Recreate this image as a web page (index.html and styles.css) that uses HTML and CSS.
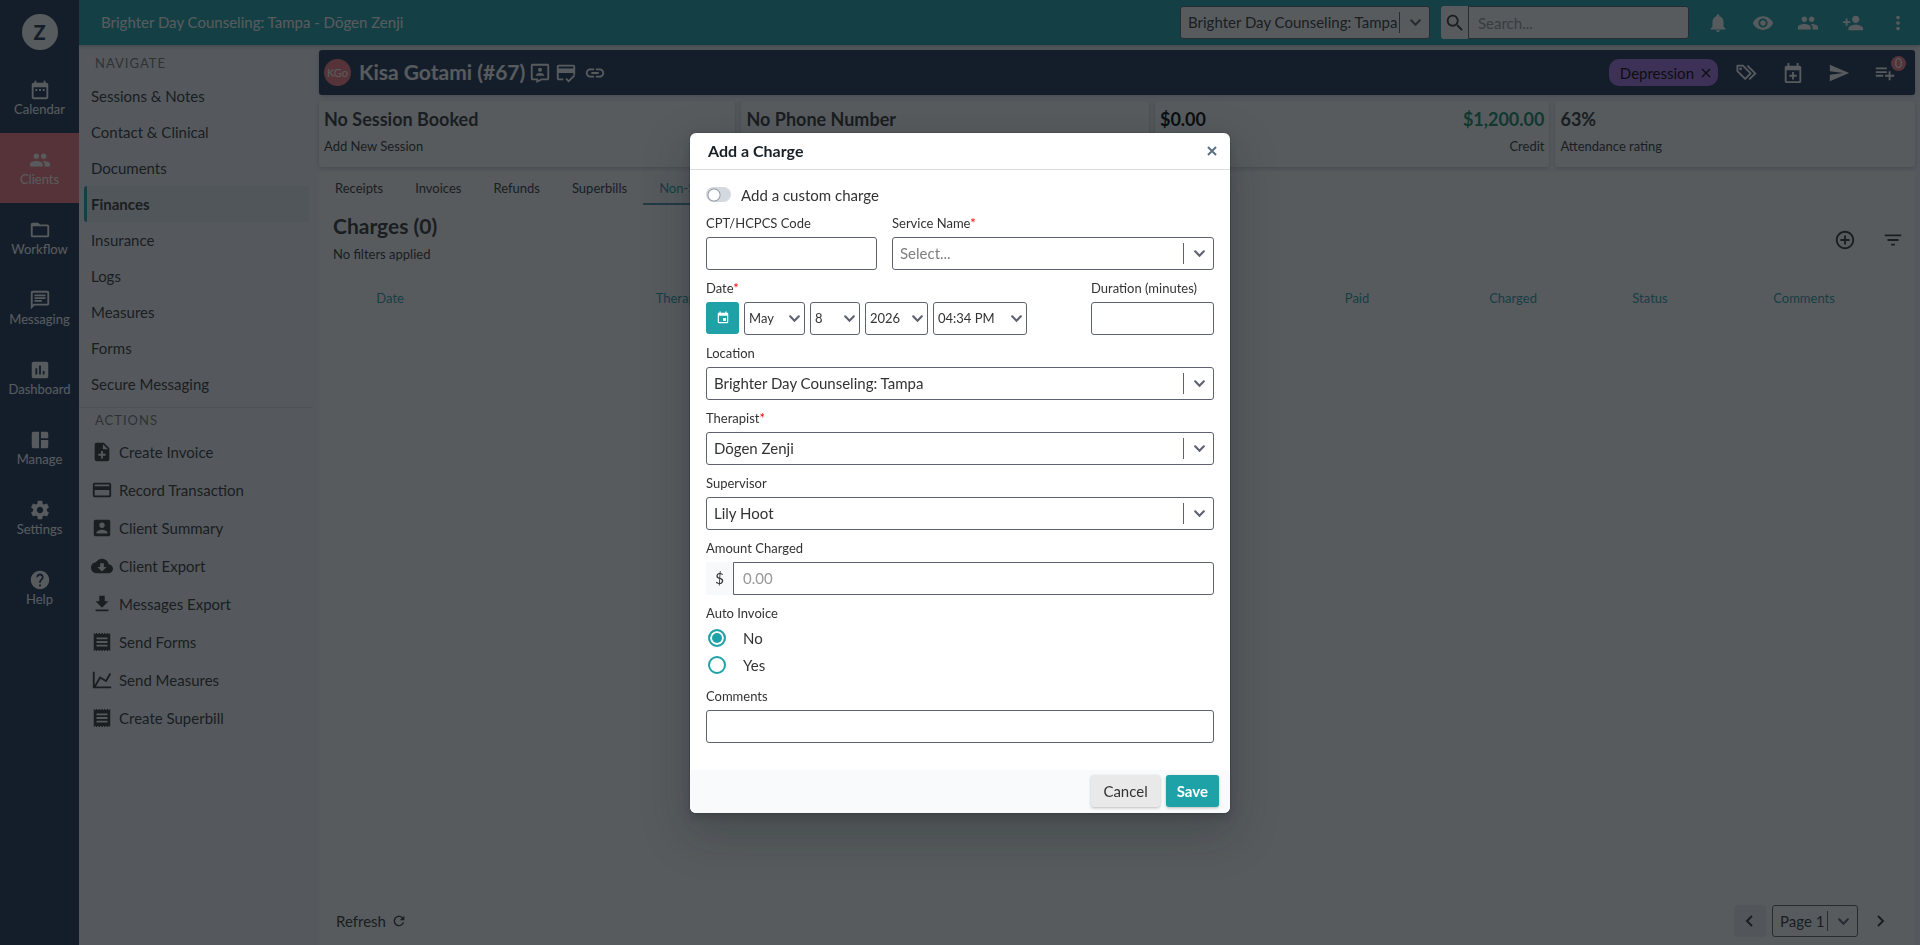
FILE: index.html
```html
<!DOCTYPE html>
<html lang="en">
<head>
  <meta charset="UTF-8">
  <title>Kisa Gotami - Finances</title>
  <meta name="viewport" content="width=device-width, initial-scale=1.0">
  <link rel="stylesheet" href="styles.css">
</head>
<body>
  <!-- Icon sprite -->
  <svg class="sprite" aria-hidden="true">
    <symbol id="i-calendar" viewBox="0 0 24 24"><path d="M9 11H7v2h2v-2zm4 0h-2v2h2v-2zm4 0h-2v2h2v-2zm2-7h-1V2h-2v2H8V2H6v2H5c-1.11 0-1.99.9-1.99 2L3 20c0 1.1.89 2 2 2h14c1.1 0 2-.9 2-2V6c0-1.1-.9-2-2-2zm0 16H5V9h14v11z"/></symbol>
    <symbol id="i-people" viewBox="0 0 24 24"><path d="M16 11c1.66 0 2.99-1.34 2.99-3S17.66 5 16 5c-1.66 0-3 1.34-3 3s1.34 3 3 3zm-8 0c1.66 0 2.99-1.34 2.99-3S9.66 5 8 5C6.34 5 5 6.34 5 8s1.34 3 3 3zm0 2c-2.33 0-7 1.17-7 3.5V19h14v-2.5c0-2.33-4.67-3.5-7-3.5zm8 0c-.29 0-.62.02-.97.05 1.16.84 1.97 1.97 1.97 3.45V19h6v-2.5c0-2.33-4.67-3.5-7-3.5z"/></symbol>
    <symbol id="i-folder" viewBox="0 0 24 24"><path d="M20 6h-8l-2-2H4c-1.1 0-1.99.9-1.99 2L2 18c0 1.1.9 2 2 2h16c1.1 0 2-.9 2-2V8c0-1.1-.9-2-2-2zm0 12H4V8h16v10z"/></symbol>
    <symbol id="i-chat" viewBox="0 0 24 24"><path d="M4 4h16v12H5.17L4 17.17V4m0-2c-1.1 0-1.99.9-1.99 2L2 22l4-4h14c1.1 0 2-.9 2-2V4c0-1.1-.9-2-2-2H4zm2 10h8v2H6v-2zm0-3h12v2H6V9zm0-3h12v2H6V6z"/></symbol>
    <symbol id="i-chart" viewBox="0 0 24 24"><path d="M19 3H5c-1.1 0-2 .9-2 2v14c0 1.1.9 2 2 2h14c1.1 0 2-.9 2-2V5c0-1.1-.9-2-2-2zM9 17H7v-7h2v7zm4 0h-2V7h2v10zm4 0h-2v-4h2v4z"/></symbol>
    <symbol id="i-manage" viewBox="0 0 24 24"><path d="M11 21H5c-1.1 0-2-.9-2-2V5c0-1.1.9-2 2-2h6v18zm2 0h6c1.1 0 2-.9 2-2v-7h-8v9zm8-11V5c0-1.1-.9-2-2-2h-6v7h8z"/></symbol>
    <symbol id="i-settings" viewBox="0 0 24 24"><path d="M19.43 12.98c.04-.32.07-.64.07-.98s-.03-.66-.07-.98l2.11-1.65c.19-.15.24-.42.12-.64l-2-3.46c-.12-.22-.39-.3-.61-.22l-2.49 1c-.52-.4-1.08-.73-1.69-.98l-.38-2.65C14.46 2.18 14.25 2 14 2h-4c-.25 0-.46.18-.49.42l-.38 2.65c-.61.25-1.17.59-1.69.98l-2.49-1c-.23-.09-.49 0-.61.22l-2 3.46c-.13.22-.07.49.12.64l2.11 1.65c-.04.32-.07.65-.07.98s.03.66.07.98l-2.11 1.65c-.19.15-.24.42-.12.64l2 3.46c.12.22.39.3.61.22l2.49-1c.52.4 1.08.73 1.69.98l.38 2.65c.03.24.24.42.49.42h4c.25 0 .46-.18.49-.42l.38-2.65c.61-.25 1.17-.59 1.69-.98l2.49 1c.23.09.49 0 .61-.22l2-3.46c.12-.22.07-.49-.12-.64l-2.11-1.65zM12 15.5c-1.93 0-3.5-1.57-3.5-3.5s1.57-3.5 3.5-3.5 3.5 1.57 3.5 3.5-1.57 3.5-3.5 3.5z"/></symbol>
    <symbol id="i-help" viewBox="0 0 24 24"><path d="M12 2C6.48 2 2 6.48 2 12s4.48 10 10 10 10-4.48 10-10S17.52 2 12 2zm1 17h-2v-2h2v2zm2.07-7.75l-.9.92C13.45 12.9 13 13.5 13 15h-2v-.5c0-1.1.45-2.1 1.17-2.83l1.24-1.26c.37-.36.59-.86.59-1.41 0-1.1-.9-2-2-2s-2 .9-2 2H8c0-2.21 1.79-4 4-4s4 1.79 4 4c0 .88-.36 1.68-.93 2.25z"/></symbol>
    <symbol id="i-note-add" viewBox="0 0 24 24"><path d="M14 2H6c-1.1 0-1.99.9-1.99 2L4 20c0 1.1.89 2 1.99 2H18c1.1 0 2-.9 2-2V8l-6-6zm2 14h-3v3h-2v-3H8v-2h3v-3h2v3h3v2zm-3-7V3.5L18.5 9H13z"/></symbol>
    <symbol id="i-card" viewBox="0 0 24 24"><path d="M20 4H4c-1.11 0-1.99.89-1.99 2L2 18c0 1.11.89 2 2 2h16c1.11 0 2-.89 2-2V6c0-1.11-.89-2-2-2zm0 14H4v-6h16v6zm0-10H4V6h16v2z"/></symbol>
    <symbol id="i-account" viewBox="0 0 24 24"><path d="M3 5v14c0 1.1.89 2 2 2h14c1.1 0 2-.9 2-2V5c0-1.1-.9-2-2-2H5c-1.11 0-2 .9-2 2zm12 4c0 1.66-1.34 3-3 3s-3-1.34-3-3 1.34-3 3-3 3 1.34 3 3zm-9 8c0-2 4-3.1 6-3.1s6 1.1 6 3.1v1H6v-1z"/></symbol>
    <symbol id="i-cloud" viewBox="0 0 24 24"><path d="M19.35 10.04C18.67 6.59 15.64 4 12 4 9.11 4 6.6 5.64 5.35 8.04 2.34 8.36 0 10.91 0 14c0 3.31 2.69 6 6 6h13c2.76 0 5-2.24 5-5 0-2.64-2.05-4.78-4.65-4.96zM17 13l-5 5-5-5h3V9h4v4h3z"/></symbol>
    <symbol id="i-download" viewBox="0 0 24 24"><path d="M19 9h-4V3H9v6H5l7 7 7-7zM5 18v2h14v-2H5z"/></symbol>
    <symbol id="i-receipt" viewBox="0 0 24 24"><path d="M18 17H6v-2h12v2zm0-4H6v-2h12v2zm0-4H6V7h12v2zM3 22l1.5-1.5L6 22l1.5-1.5L9 22l1.5-1.5L12 22l1.5-1.5L15 22l1.5-1.5L18 22l1.5-1.5L21 22V2l-1.5 1.5L18 2l-1.5 1.5L15 2l-1.5 1.5L12 2l-1.5 1.5L9 2 7.5 3.5 6 2 4.5 3.5 3 2v20z"/></symbol>
    <symbol id="i-line" viewBox="0 0 24 24"><path d="M16 11.78l4.24-7.33 1.73 1-5.23 9.05-6.51-3.75L5.46 19H22v2H2V3h2v14.54L9.5 8z"/></symbol>
    <symbol id="i-bell" viewBox="0 0 24 24"><path d="M12 22c1.1 0 2-.9 2-2h-4c0 1.1.89 2 2 2zm6-6v-5c0-3.07-1.64-5.64-4.5-6.32V4c0-.83-.67-1.5-1.5-1.5s-1.5.67-1.5 1.5v.68C7.63 5.36 6 7.92 6 11v5l-2 2v1h16v-1l-2-2z"/></symbol>
    <symbol id="i-eye" viewBox="0 0 24 24"><path d="M12 4.5C7 4.5 2.73 7.61 1 12c1.73 4.39 6 7.5 11 7.5s9.27-3.11 11-7.5c-1.73-4.39-6-7.5-11-7.5zM12 17c-2.76 0-5-2.24-5-5s2.24-5 5-5 5 2.24 5 5-2.24 5-5 5zm0-8c-1.66 0-3 1.34-3 3s1.34 3 3 3 3-1.34 3-3-1.34-3-3-3z"/></symbol>
    <symbol id="i-person-add" viewBox="0 0 24 24"><path d="M15 12c2.21 0 4-1.79 4-4s-1.79-4-4-4-4 1.79-4 4 1.79 4 4 4zm-9-2V7H4v3H1v2h3v3h2v-3h3v-2H6zm9 4c-2.67 0-8 1.34-8 4v2h16v-2c0-2.66-5.33-4-8-4z"/></symbol>
    <symbol id="i-more" viewBox="0 0 24 24"><path d="M12 8c1.1 0 2-.9 2-2s-.9-2-2-2-2 .9-2 2 .9 2 2 2zm0 2c-1.1 0-2 .9-2 2s.9 2 2 2 2-.9 2-2-.9-2-2-2zm0 6c-1.1 0-2 .9-2 2s.9 2 2 2 2-.9 2-2-.9-2-2-2z"/></symbol>
    <symbol id="i-search" viewBox="0 0 24 24"><path d="M15.5 14h-.79l-.28-.27C15.41 12.59 16 11.11 16 9.5 16 5.91 13.09 3 9.5 3S3 5.91 3 9.5 5.91 16 9.5 16c1.61 0 3.09-.59 4.23-1.57l.27.28v.79l5 4.99L20.49 19l-4.99-5zm-6 0C7.01 14 5 11.99 5 9.5S7.01 5 9.5 5 14 7.01 14 9.5 11.99 14 9.5 14z"/></symbol>
    <symbol id="i-contact" viewBox="0 0 24 24"><path d="M20 2H4c-1.1 0-2 .9-2 2v14c0 1.1.9 2 2 2h4v3l6-3h6c1.1 0 2-.9 2-2V4c0-1.1-.9-2-2-2zm0 16h-6.5L10 19.8V18H4V4h16v14z"/><circle cx="12" cy="8.500" r="2.200"/><path d="M7.500 14.800c0-2 3-2.800 4.500-2.800s4.500.8 4.500 2.800V15h-9z"/></symbol>
    <symbol id="i-card-check" viewBox="0 0 24 24"><path d="M20 3H4c-1.110 0-2 .89-2 2v13c0 1.110.89 2 2 2h5v-2H4v-6h16v2h2V5c0-1.110-.89-2-2-2zm0 4H4V5h16v2z"/><path d="M14.900 22.300l-3.500-3.500 1.400-1.400 2.100 2.100 5.700-5.700 1.400 1.400z"/></symbol>
    <symbol id="i-link" viewBox="0 0 24 24"><path d="M3.900 12c0-1.710 1.390-3.100 3.100-3.100h4V7H7c-2.760 0-5 2.240-5 5s2.240 5 5 5h4v-1.900H7c-1.710 0-3.100-1.390-3.100-3.100zM8 13h8v-2H8v2zm9-6h-4v1.900h4c1.710 0 3.100 1.390 3.100 3.100s-1.390 3.100-3.100 3.100h-4V17h4c2.760 0 5-2.240 5-5s-2.240-5-5-5z"/></symbol>
    <symbol id="i-tags" viewBox="0 0 24 24"><path d="M1.500 4v6l8.500 8.500 6-6L7.500 4z" fill="none" stroke="currentColor" stroke-width="2" stroke-linejoin="round"/><path d="M12.500 4l8.500 8.500-6.500 6.500" fill="none" stroke="currentColor" stroke-width="2"/><circle cx="5" cy="7.500" r="1.400"/></symbol>
    <symbol id="i-event-add" viewBox="0 0 24 24"><path d="M19 4h-1V1h-2v3H8V1H6v3H5c-1.100 0-2 .9-2 2v15c0 1.100.9 2 2 2h14c1.100 0 2-.9 2-2V6c0-1.100-.9-2-2-2zm0 17H5V9h14v12zm-8-2h2v-3h3v-2h-3v-3h-2v3H8v2h3z"/></symbol>
    <symbol id="i-send" viewBox="0 0 24 24"><path d="M2.010 21L23 12 2.010 3 2 10l15 2-15 2z"/></symbol>
    <symbol id="i-list-add" viewBox="0 0 24 24"><path d="M14 10H2v2h12v-2zm0-4H2v2h12V6zm4 8v-4h-2v4h-4v2h4v4h2v-4h4v-2h-4zM2 16h8v-2H2v2z"/></symbol>
    <symbol id="i-add" viewBox="0 0 24 24"><path d="M13 7h-2v4H7v2h4v4h2v-4h4v-2h-4V7zm-1-5C6.480 2 2 6.480 2 12s4.480 10 10 10 10-4.480 10-10S17.520 2 12 2zm0 18c-4.410 0-8-3.590-8-8s3.590-8 8-8 8 3.590 8 8-3.590 8-8 8z"/></symbol>
    <symbol id="i-filter" viewBox="0 0 24 24"><path d="M10 18h4v-2h-4v2zM3 6v2h18V6H3zm3 7h12v-2H6v2z"/></symbol>
    <symbol id="i-refresh" viewBox="0 0 24 24"><path d="M17.650 6.350C16.200 4.900 14.210 4 12 4c-4.420 0-7.990 3.580-7.990 8s3.570 8 7.990 8c3.730 0 6.840-2.550 7.730-6h-2.080c-.82 2.330-3.040 4-5.650 4-3.310 0-6-2.690-6-6s2.690-6 6-6c1.660 0 3.140.69 4.220 1.780L13 11h7V4l-2.350 2.350z"/></symbol>
    <symbol id="i-event" viewBox="0 0 24 24"><path d="M17 12h-5v5h5v-5zM16 1v2H8V1H6v2H5c-1.110 0-1.990.9-1.990 2L3 19c0 1.100.89 2 2 2h14c1.100 0 2-.9 2-2V5c0-1.100-.9-2-2-2h-1V1h-2zm3 18H5V8h14v11z"/></symbol>
    <symbol id="i-down" viewBox="0 0 12 12"><path d="M2 4l4 4 4-4" fill="none" stroke="currentColor" stroke-width="2" stroke-linecap="round"/></symbol>
    <symbol id="i-left" viewBox="0 0 12 12"><path d="M8 1L3 6l5 5" fill="none" stroke="currentColor" stroke-width="2"/></symbol>
    <symbol id="i-right" viewBox="0 0 12 12"><path d="M4 1l5 5-5 5" fill="none" stroke="currentColor" stroke-width="2"/></symbol>
    <symbol id="i-close" viewBox="0 0 12 12"><path d="M2 2l8 8M10 2l-8 8" fill="none" stroke="currentColor" stroke-width="2"/></symbol>
    <symbol id="i-close-thin" viewBox="0 0 12 12"><path d="M2 2l8 8M10 2l-8 8" fill="none" stroke="currentColor" stroke-width="1.300"/></symbol>
  </svg>

  <div class="app">
    <nav class="rail" aria-label="Main">
      <a href="#" class="logo">Z</a>
      <a href="#" class="rail-item"><svg class="icon"><use href="#i-calendar"/></svg>Calendar</a>
      <a href="#" class="rail-item active"><svg class="icon"><use href="#i-people"/></svg>Clients</a>
      <a href="#" class="rail-item"><svg class="icon"><use href="#i-folder"/></svg>Workflow</a>
      <a href="#" class="rail-item"><svg class="icon"><use href="#i-chat"/></svg>Messaging</a>
      <a href="#" class="rail-item"><svg class="icon"><use href="#i-chart"/></svg>Dashboard</a>
      <a href="#" class="rail-item"><svg class="icon"><use href="#i-manage"/></svg>Manage</a>
      <a href="#" class="rail-item"><svg class="icon"><use href="#i-settings"/></svg>Settings</a>
      <a href="#" class="rail-item"><svg class="icon"><use href="#i-help"/></svg>Help</a>
    </nav>

    <div class="page">
      <header class="topbar">
        <div class="practice">Brighter Day Counseling: Tampa - Dōgen Zenji</div>
        <div class="select select-split top-select">
          <select aria-label="Practice location"><option>Brighter Day Counseling: Tampa</option></select>
          <span class="arrow"><svg><use href="#i-down"/></svg></span>
        </div>
        <div class="search">
          <button type="button" aria-label="Search"><svg class="icon"><use href="#i-search"/></svg></button>
          <input type="text" placeholder="Search..." aria-label="Search text">
        </div>
        <div class="top-icons">
          <button type="button" aria-label="Notifications"><svg class="icon"><use href="#i-bell"/></svg></button>
          <button type="button" aria-label="View"><svg class="icon"><use href="#i-eye"/></svg></button>
          <button type="button" aria-label="Clients"><svg class="icon"><use href="#i-people"/></svg></button>
          <button type="button" aria-label="Add client"><svg class="icon"><use href="#i-person-add"/></svg></button>
          <button type="button" aria-label="More"><svg class="icon"><use href="#i-more"/></svg></button>
        </div>
      </header>

      <div class="columns">
        <aside class="side">
          <h2 class="side-title">NAVIGATE</h2>
          <nav class="side-nav" aria-label="Client">
            <a href="#">Sessions &amp; Notes</a>
            <a href="#">Contact &amp; Clinical</a>
            <a href="#">Documents</a>
            <a href="#" class="active">Finances</a>
            <a href="#">Insurance</a>
            <a href="#">Logs</a>
            <a href="#">Measures</a>
            <a href="#">Forms</a>
            <a href="#">Secure Messaging</a>
          </nav>
          <h2 class="side-title divided">ACTIONS</h2>
          <nav class="side-actions" aria-label="Actions">
            <a href="#"><svg class="icon"><use href="#i-note-add"/></svg>Create Invoice</a>
            <a href="#"><svg class="icon"><use href="#i-card"/></svg>Record Transaction</a>
            <a href="#"><svg class="icon"><use href="#i-account"/></svg>Client Summary</a>
            <a href="#"><svg class="icon"><use href="#i-cloud"/></svg>Client Export</a>
            <a href="#"><svg class="icon"><use href="#i-download"/></svg>Messages Export</a>
            <a href="#"><svg class="icon"><use href="#i-receipt"/></svg>Send Forms</a>
            <a href="#"><svg class="icon"><use href="#i-line"/></svg>Send Measures</a>
            <a href="#"><svg class="icon"><use href="#i-receipt"/></svg>Create Superbill</a>
          </nav>
        </aside>

        <main class="main">
          <div class="client-bar">
            <span class="avatar">KGo</span>
            <h1>Kisa Gotami (#67)</h1>
            <div class="client-links">
              <button type="button" aria-label="Contact"><svg class="icon"><use href="#i-contact"/></svg></button>
              <button type="button" aria-label="Card on file"><svg class="icon"><use href="#i-card-check"/></svg></button>
              <button type="button" aria-label="Link"><svg class="icon"><use href="#i-link"/></svg></button>
            </div>
            <span class="tag">Depression <button type="button" aria-label="Remove tag"><svg><use href="#i-close-thin"/></svg></button></span>
            <div class="client-icons">
              <button type="button" aria-label="Tags"><svg class="icon"><use href="#i-tags"/></svg></button>
              <button type="button" aria-label="Add session"><svg class="icon"><use href="#i-event-add"/></svg></button>
              <button type="button" aria-label="Send"><svg class="icon"><use href="#i-send"/></svg></button>
              <button type="button" aria-label="Tasks"><svg class="icon"><use href="#i-list-add"/></svg><span class="badge">0</span></button>
            </div>
          </div>

          <div class="cards">
            <div class="card"><strong>No Session Booked</strong><span>Add New Session</span></div>
            <div class="card"><strong>No Phone Number</strong></div>
            <div class="card split">
              <div><strong class="black">$0.00</strong></div>
              <div class="right"><strong class="green">$1,200.00</strong><span>Credit</span></div>
            </div>
            <div class="card"><strong>63%</strong><span>Attendance rating</span></div>
          </div>

          <section class="panel">
            <div class="tabs">
              <a href="#">Receipts</a>
              <a href="#">Invoices</a>
              <a href="#">Refunds</a>
              <a href="#">Superbills</a>
              <a href="#" class="active">Non-Session</a>
            </div>
            <div class="panel-head">
              <div>
                <h2>Charges (0)</h2>
                <p>No filters applied</p>
              </div>
              <div class="panel-icons">
                <button type="button" aria-label="Add charge"><svg class="icon"><use href="#i-add"/></svg></button>
                <button type="button" aria-label="Filter"><svg class="icon"><use href="#i-filter"/></svg></button>
              </div>
            </div>
            <table class="charges">
              <thead>
                <tr>
                  <th class="c-date">Date</th>
                  <th class="c-therapist">Therapist</th>
                  <th>Service</th>
                  <th class="c-amount">Paid</th>
                  <th class="c-amount">Charged</th>
                  <th class="c-status">Status</th>
                  <th class="c-comments">Comments</th>
                </tr>
              </thead>
            </table>
            <div class="panel-foot">
              <button type="button" class="refresh">Refresh <svg><use href="#i-refresh"/></svg></button>
              <div class="pager">
                <button type="button" class="prev" aria-label="Previous page"><svg><use href="#i-left"/></svg></button>
                <div class="select select-split page-select">
                  <select aria-label="Page"><option>Page 1</option></select>
                  <span class="arrow"><svg><use href="#i-down"/></svg></span>
                </div>
                <button type="button" aria-label="Next page"><svg><use href="#i-right"/></svg></button>
              </div>
            </div>
          </section>
        </main>
      </div>
    </div>
  </div>

  <!-- Add charge dialog -->
  <div class="overlay">
    <form class="dialog" role="dialog" aria-labelledby="dialog-title">
      <div class="dialog-head">
        <h2 id="dialog-title">Add a Charge</h2>
        <button type="button" aria-label="Close"><svg><use href="#i-close"/></svg></button>
      </div>

      <div class="dialog-body">
        <label class="toggle"><input type="checkbox">Add a custom charge</label>

        <div class="row">
          <div class="field code">
            <label for="code">CPT/HCPCS Code</label>
            <input type="text" id="code">
          </div>
          <div class="field grow">
            <label for="service">Service Name<span class="req">*</span></label>
            <div class="select select-split empty">
              <select id="service"><option>Select...</option></select>
              <span class="arrow"><svg><use href="#i-down"/></svg></span>
            </div>
          </div>
        </div>

        <div class="row">
          <div class="field grow">
            <label for="month">Date<span class="req">*</span></label>
            <div class="date-row">
              <button type="button" class="date-button" aria-label="Pick a date"><svg><use href="#i-event"/></svg></button>
              <div class="select month"><select id="month"><option>May</option></select><span class="arrow"><svg><use href="#i-down"/></svg></span></div>
              <div class="select day"><select aria-label="Day"><option>8</option></select><span class="arrow"><svg><use href="#i-down"/></svg></span></div>
              <div class="select year"><select aria-label="Year"><option>2026</option></select><span class="arrow"><svg><use href="#i-down"/></svg></span></div>
              <div class="select time"><select aria-label="Time"><option>04:34 PM</option></select><span class="arrow"><svg><use href="#i-down"/></svg></span></div>
            </div>
          </div>
          <div class="field duration">
            <label for="duration">Duration (minutes)</label>
            <input type="text" id="duration">
          </div>
        </div>

        <div class="field">
          <label for="location">Location</label>
          <div class="select select-split">
            <select id="location"><option>Brighter Day Counseling: Tampa</option></select>
            <span class="arrow"><svg><use href="#i-down"/></svg></span>
          </div>
        </div>

        <div class="field">
          <label for="therapist">Therapist<span class="req">*</span></label>
          <div class="select select-split">
            <select id="therapist"><option>Dōgen Zenji</option></select>
            <span class="arrow"><svg><use href="#i-down"/></svg></span>
          </div>
        </div>

        <div class="field">
          <label for="supervisor">Supervisor</label>
          <div class="select select-split">
            <select id="supervisor"><option>Lily Hoot</option></select>
            <span class="arrow"><svg><use href="#i-down"/></svg></span>
          </div>
        </div>

        <div class="field">
          <label for="amount">Amount Charged</label>
          <div class="money">
            <span>$</span>
            <input type="text" id="amount" placeholder="0.00">
          </div>
        </div>

        <fieldset class="radios">
          <legend>Auto Invoice</legend>
          <label><input type="radio" name="auto" checked>No</label>
          <label><input type="radio" name="auto">Yes</label>
        </fieldset>

        <div class="field">
          <label for="comments">Comments</label>
          <input type="text" id="comments">
        </div>
      </div>

      <div class="dialog-foot">
        <button type="button" class="btn">Cancel</button>
        <button type="submit" class="btn primary">Save</button>
      </div>
    </form>
  </div>
</body>
</html>
```
FILE: styles.css
```css
* {
  box-sizing: border-box;
}
body {
  font-family: Lato, "Open Sans", sans-serif;
  font-size: 15px;
  line-height: 20px;
  color: #333;
  background-color: #f7f8fb;
  margin: 0;
}
h1, h2, p {
  margin: 0;
}
a {
  color: inherit;
  text-decoration: none;
}
button {
  font: inherit;
  color: inherit;
  background: none;
  border: none;
  padding: 0;
  display: flex;
  align-items: center;
  justify-content: center;
  cursor: pointer;
}
input, select {
  font: inherit;
  color: #333;
}
.sprite {
  position: absolute;
  width: 0;
  height: 0;
}
.icon {
  width: 22px;
  height: 22px;
  flex: none;
}
svg {
  fill: currentColor;
}

.app {
  display: flex;
  min-height: 100vh;
}
.page {
  flex: 1;
  display: flex;
  flex-direction: column;
  min-width: 0;
}

/* Left rail */
.rail {
  width: 79px;
  background-color: #213453;
  color: #fff;
  font-size: 13px;
}
.logo {
  display: flex;
  align-items: center;
  justify-content: center;
  width: 36px;
  height: 36px;
  margin: 14px auto 13px;
  border-radius: 50%;
  background-color: #fff;
  color: #213453;
  font-size: 20px;
  font-weight: 900;
}
.rail-item {
  display: flex;
  flex-direction: column;
  align-items: center;
  height: 70px;
  padding-top: 16px;
  line-height: 16px;
}
.rail-item.active {
  background-color: #fa7b7f;
}

/* Top bar */
.topbar {
  display: flex;
  align-items: center;
  height: 45px;
  padding-left: 22px;
  background-color: #1fa2a7;
  color: #fff;
  box-shadow: 0 1px 4px rgba(0,0,0,0.3);
}
.practice {
  flex: 1;
  padding-bottom: 2px;
}
.top-select {
  width: 250px;
}
.search {
  display: flex;
  width: 248px;
  height: 33px;
  margin: 0 6px 0 11px;
}
.search button {
  width: 27px;
  background-color: #fff;
  color: #333;
  border-radius: 3px 0 0 3px;
}
.search input {
  flex: 1;
  min-width: 0;
  border: 1px solid #5f6270;
  border-radius: 0 3px 3px 0;
  padding: 0 9px;
}
.top-icons {
  display: flex;
}
.top-icons button {
  width: 45px;
  height: 45px;
}

::placeholder {
  color: #999;
  opacity: 1;
}

/* Selects */
.select {
  position: relative;
  height: 33px;
}
.select select {
  appearance: none;
  width: 100%;
  height: 100%;
  padding: 0 28px 1px 7px;
  border: 1px solid #5f6270;
  border-radius: 3px;
  background-color: #fff;
}
.select .arrow {
  position: absolute;
  top: 0;
  right: 0;
  bottom: 0;
  width: 22px;
  display: flex;
  align-items: center;
  justify-content: center;
  color: #5f6270;
  pointer-events: none;
}
.select .arrow svg {
  width: 13px;
  height: 13px;
}
.select-split .arrow {
  width: 31px;
  top: 6px;
  bottom: 6px;
  border-left: 1px solid #5f6270;
}
.select.empty select {
  color: #808080;
}

/* Client side menu */
.columns {
  flex: 1;
  display: flex;
}
.side {
  width: 240px;
  padding: 8px 6px 0 0;
}
.side-title {
  font-size: 13px;
  font-weight: normal;
  line-height: 20px;
  letter-spacing: 1px;
  color: #777;
  padding-left: 16px;
}
.side-title.divided {
  border-top: 1px solid #dcdee4;
  padding-top: 2px;
}
.side-nav {
  padding: 5px 4px 5px 5px;
}
.side-nav a {
  display: flex;
  align-items: center;
  height: 36px;
  padding-left: 4px;
  border-left: 3px solid transparent;
  border-radius: 3px;
}
.side-nav a.active {
  border-left-color: #1fa2a7;
  background-color: #ebedf0;
  font-weight: bold;
}
.side-actions {
  padding: 3px 0 0 12px;
}
.side-actions a {
  display: flex;
  align-items: center;
  gap: 6px;
  height: 38px;
}

/* Main column */
.main {
  flex: 1;
  display: flex;
  flex-direction: column;
  min-width: 0;
  padding: 5px 5px 0 0;
}
.client-bar {
  display: flex;
  align-items: center;
  height: 45px;
  padding: 0 7px 0 5px;
  border-radius: 3px;
  background-color: #213453;
  color: #fff;
  box-shadow: 0 1px 4px rgba(0,0,0,0.2);
}
.avatar {
  width: 27px;
  height: 27px;
  border-radius: 50%;
  background-color: #fa7b7f;
  font-size: 11px;
  line-height: 27px;
  text-align: center;
}
.client-bar h1 {
  margin-left: 8px;
  padding-bottom: 2px;
  font-size: 21px;
}
.client-links {
  flex: 1;
  display: flex;
  gap: 4px;
  padding-left: 4px;
}
.client-links button:last-child {
  margin-left: 3px;
}
.tag {
  display: flex;
  align-items: center;
  gap: 6px;
  height: 27px;
  padding: 0 6px 0 11px;
  margin-right: 6px;
  border-radius: 10px;
  background-color: #ac73e6;
  color: #000;
}
.tag svg {
  width: 12px;
  height: 12px;
}
.client-icons {
  display: flex;
}
.client-icons button {
  position: relative;
  width: 46px;
  height: 45px;
}
.badge {
  position: absolute;
  top: 6px;
  right: 2px;
  width: 15px;
  height: 15px;
  border-radius: 50%;
  background-color: #fa7b7f;
  font-size: 13px;
  line-height: 15px;
}

.cards {
  display: grid;
  grid-template-columns: 417fr 408fr 395fr 360fr;
  gap: 6px;
  margin: 6px 0 5px;
}
.card {
  height: 66px;
  padding: 8px 5px;
  border-radius: 3px;
  background-color: #fff;
  box-shadow: 0 1px 4px rgba(0,0,0,0.2);
  font-size: 13px;
}
.card strong {
  display: block;
  font-size: 18px;
  margin-bottom: 7px;
}
.card .black {
  color: #000;
}
.card .green {
  color: #148a62;
}
.card.split {
  display: flex;
  justify-content: space-between;
}
.right {
  text-align: right;
}

/* Charges panel */
.panel {
  flex: 1;
  display: flex;
  flex-direction: column;
  background-color: #fff;
}
.tabs {
  display: flex;
  font-size: 13px;
}
.tabs a {
  height: 33px;
  padding: 0 16px;
  line-height: 33px;
}
.tabs a.active {
  color: #1fa2a7;
  border-bottom: 2px solid #4a90b0;
  background-color: #fafafc;
}
.panel-head {
  display: flex;
  justify-content: space-between;
  padding: 11px 11px 0 14px;
}
.panel-head h2 {
  font-size: 21px;
}
.panel-head p {
  margin-top: 8px;
  font-size: 13px;
}
.panel-icons {
  display: flex;
  gap: 26px;
}
.charges {
  width: 99%;
  margin-top: 24px;
  border-collapse: collapse;
  table-layout: fixed;
}
.charges th {
  padding: 0;
  font-size: 13px;
  font-weight: normal;
  color: #1fa2a7;
}
.charges .c-date {
  width: 9%;
}
.charges .c-therapist {
  width: 28%;
}
.charges .c-amount {
  width: 156px;
}
.charges .c-status {
  width: 118px;
}
.charges .c-comments {
  width: 190px;
}
.panel-foot {
  display: flex;
  align-items: center;
  justify-content: space-between;
  margin-top: auto;
  padding: 0 19px 8px 17px;
}
.refresh {
  gap: 5px;
}
.refresh svg {
  width: 16px;
  height: 16px;
}
.pager {
  display: flex;
  gap: 6px;
}
.pager button {
  width: 32px;
  height: 32px;
  border-radius: 3px;
}
.pager button svg {
  width: 12px;
  height: 12px;
}
.pager .prev {
  background-color: #edeef0;
}
.page-select {
  width: 86px;
  height: 32px;
}

/* Dialog */
.overlay {
  position: fixed;
  inset: 0;
  display: flex;
  align-items: center;
  justify-content: center;
  background-color: rgba(16,22,26,0.7);
}
.dialog {
  width: 540px;
  border-radius: 6px;
  background-color: #fff;
  box-shadow: 0 0 0 1px rgba(16,22,26,0.1), 0 4px 8px rgba(16,22,26,0.2), 0 18px 46px 6px rgba(16,22,26,0.2);
  overflow: hidden;
}
.dialog-head {
  display: flex;
  align-items: center;
  justify-content: space-between;
  height: 37px;
  padding: 0 12px 0 18px;
  border-bottom: 1px solid #dadddf;
}
.dialog-head h2 {
  font-size: 16px;
  color: #182026;
}
.dialog-head button {
  color: #5c7080;
}
.dialog-head svg {
  width: 12px;
  height: 12px;
}
.dialog-body {
  padding: 15px 16px 19px;
}
.toggle {
  display: flex;
  align-items: center;
  gap: 10px;
  margin-bottom: 8px;
}
.toggle input {
  appearance: none;
  width: 25px;
  height: 15px;
  margin: 0;
  border-radius: 8px;
  background: radial-gradient(circle at 8px 8px, #fff 5px, #8f9aa3 6px, #d3d9df 7px);
}
.row {
  display: flex;
  gap: 15px;
}
.grow {
  flex: 1;
}
.code {
  width: 171px;
}
.duration {
  width: 123px;
}
.field {
  margin-bottom: 8px;
}
.field > label {
  display: block;
  margin-bottom: 4px;
  font-size: 13px;
}
.field > input, .money input {
  display: block;
  width: 100%;
  height: 33px;
  padding: 0 9px;
  border: 1px solid #5f6270;
  border-radius: 3px;
  background-color: #fff;
}
.req {
  color: #f00;
}
.date-row {
  display: flex;
  gap: 5px;
  font-size: 13px;
}
.date-button {
  width: 33px;
  height: 32px;
  border-radius: 3px;
  background-color: #1fa2a7;
  color: #fff;
}
.date-button svg {
  width: 14px;
  height: 14px;
}
.date-row select {
  padding: 0 20px 0 4px;
}
.month {
  width: 61px;
}
.day {
  width: 50px;
}
.year {
  width: 63px;
}
.time {
  width: 94px;
}
.money {
  display: flex;
}
.money span {
  width: 27px;
  flex: none;
  background-color: #f8f9fb;
  line-height: 32px;
  text-align: center;
}
.money input {
  border-radius: 0 3px 3px 0;
}
.radios {
  margin: 0 0 7px;
  padding: 0;
  border: none;
}
.radios legend {
  padding: 0;
  margin-bottom: 2px;
  font-size: 13px;
}
.radios label {
  display: flex;
  align-items: center;
  gap: 17px;
  height: 27px;
}
.radios input {
  appearance: none;
  width: 18px;
  height: 18px;
  margin: 0 0 0 2px;
  border: 2px solid #1fa2a7;
  border-radius: 50%;
}
.radios input:checked {
  background-color: #1fa2a7;
  box-shadow: inset 0 0 0 2px #fff;
}
.dialog-foot {
  display: flex;
  justify-content: flex-end;
  gap: 6px;
  padding: 5px 11px 6px;
  background-color: #f9fafc;
}
.btn {
  height: 32px;
  padding: 0 12px;
  border-radius: 3px;
  background-color: #e9e9e9;
  box-shadow: 0 1px 3px rgba(0,0,0,0.25);
}
.btn.primary {
  padding: 0 11px;
  background-color: #1fa2a7;
  color: #fff;
  font-weight: bold;
}
```
